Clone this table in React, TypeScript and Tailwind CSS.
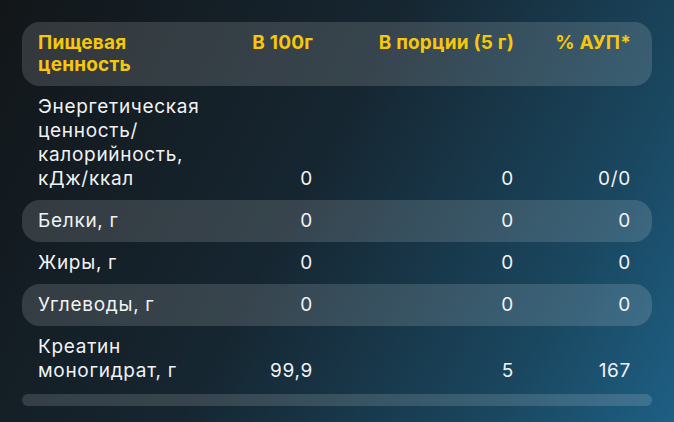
import React from 'react';

interface NutritionRow {
  label: string[];
  per100: string;
  perServing: string;
  rda: string;
  striped?: boolean;
}

const ROWS: NutritionRow[] = [
  { label: ['Энергетическая', 'ценность/', 'калорийность,', 'кДж/ккал'], per100: '0', perServing: '0', rda: '0/0' },
  { label: ['Белки, г'], per100: '0', perServing: '0', rda: '0', striped: true },
  { label: ['Жиры, г'], per100: '0', perServing: '0', rda: '0' },
  { label: ['Углеводы, г'], per100: '0', perServing: '0', rda: '0', striped: true },
  { label: ['Креатин', 'моногидрат, г'], per100: '99,9', perServing: '5', rda: '167' },
];

// label | В 100г | В порции | % АУП
const gridCols = 'grid grid-cols-[200px_75px_201px_117px]';

export default function App() {
  return (
    <div
      className="w-[674px] h-[422px] overflow-hidden bg-[linear-gradient(118deg,#121619_0%,#162631_45%,#1a4760_80%,#1e5f84_100%)] px-[22px] pt-[22px]"
      style={{ fontFamily: 'Inter, "Noto Sans", sans-serif' }}
    >
      {/* Header */}
      <div className={`${gridCols} items-start rounded-[18px] bg-white/[0.14] pl-[16px] pr-[20px] py-[10px] text-[19px] leading-[22px] font-bold tracking-[0.2px] text-[#f6c70c]`}>
        <div>
          Пищевая
          <br />
          ценность
        </div>
        <div className="text-right">В 100г</div>
        <div className="text-right">В порции (5 г)</div>
        <div className="text-right">% АУП*</div>
      </div>

      {/* Rows */}
      {ROWS.map((row, i) => (
        <div
          key={i}
          className={`${gridCols} items-end rounded-[18px] pl-[16px] pr-[20px] py-[9px] text-[19px] leading-[24px] tracking-[0.7px] text-[#f1f3f4] ${
            row.striped ? 'bg-white/[0.14]' : ''
          }`}
        >
          <div>
            {row.label.map((line, j) => (
              <div key={j}>{line}</div>
            ))}
          </div>
          <div className="text-right">{row.per100}</div>
          <div className="text-right">{row.perServing}</div>
          <div className="text-right">{row.rda}</div>
        </div>
      ))}

      {/* next striped row peeking in */}
      <div className="mt-[2px] h-[12px] rounded-full bg-white/[0.14]" />
    </div>
  );
}
